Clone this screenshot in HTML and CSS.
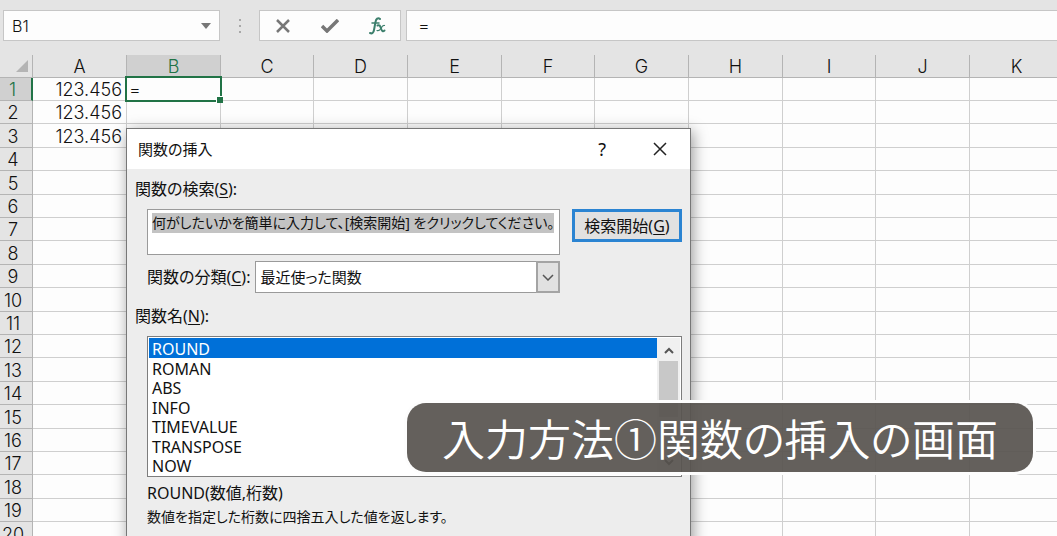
FILE: index.html
```html
<!DOCTYPE html>
<html lang="ja">
<head>
    <meta charset="UTF-8">
    <meta name="viewport" content="width=device-width, initial-scale=1.0">
    <title>関数の挿入</title>
    <link rel="stylesheet" href="styles.css">
</head>

<body>
    <div class="formula-bar">
        <div class="name-box">
            <input type="text" value="B1" aria-label="名前ボックス">
            <svg class="name-arrow" width="10" height="6" viewBox="0 0 10 6"><path d="M0 0h10L5 6z" fill="#777"/></svg>
        </div>
        <svg class="grip" width="4" height="14" viewBox="0 0 4 14" fill="#a8a8a8">
            <rect x="1" y="0" width="2" height="2"/><rect x="1" y="6" width="2" height="2"/><rect x="1" y="12" width="2" height="2"/>
        </svg>
        <div class="formula-buttons">
            <button type="button" aria-label="キャンセル">
                <svg width="16" height="14" viewBox="0 0 16 14" fill="none" stroke="#777" stroke-width="2.500"><path d="M2 1l12 12M14 1L2 13"/></svg>
            </button>
            <button type="button" aria-label="入力">
                <svg width="18" height="14" viewBox="0 0 18 14" fill="none" stroke="#777" stroke-width="3.500"><path d="M1 7l5 5L17 1"/></svg>
            </button>
            <button type="button" class="fx" aria-label="関数の挿入">
                <svg width="18" height="18" viewBox="0 0 18 18" fill="none" stroke="#3c7f6c" stroke-linecap="round">
                    <path d="M11 2c-2-2-4 0-4.500 3L5 13c-.5 3-2 4-4 3" stroke-width="2"/>
                    <path d="M3 6h7" stroke-width="1.500"/>
                    <path d="M8.500 8.500c2-1 2.500 0 3.500 3s2 3.500 3.500 2" stroke-width="2"/>
                    <path d="M15.500 8.500c-2-.5-3 2-4 3.500s-2 2-3.500 1.500" stroke-width="1.200"/>
                </svg>
            </button>
        </div>
        <input class="formula-input" type="text" value="=" aria-label="数式バー">
    </div>

    <table class="sheet" id="sheet">
        <colgroup>
            <col class="col-index"><col><col><col><col><col><col><col><col><col><col><col class="col-last">
        </colgroup>
        <thead>
            <tr>
                <th class="corner"><svg width="12" height="12" viewBox="0 0 12 12"><path d="M12 0v12H0z" fill="#b4b4b4"/></svg></th>
                <th>A</th><th class="active">B</th><th>C</th><th>D</th><th>E</th><th>F</th><th>G</th><th>H</th><th>I</th><th>J</th><th>K</th>
            </tr>
        </thead>
        <tbody></tbody>
    </table>

    <div class="dialog" role="dialog" aria-labelledby="dialogTitle">
        <div class="dialog-title">
            <span id="dialogTitle">関数の挿入</span>
            <button type="button" class="help">?</button>
            <button type="button" class="close" aria-label="閉じる">
                <svg width="14" height="14" viewBox="0 0 14 14" fill="none" stroke="#222" stroke-width="1.500"><path d="M1 1l12 12M13 1L1 13"/></svg>
            </button>
        </div>
        <div class="dialog-body">
            <label for="search">関数の検索(<u>S</u>):</label>
            <div class="search-row">
                <textarea id="search">何がしたいかを簡単に入力して、[検索開始] をクリックしてください。</textarea>
                <button type="button" class="search-button">検索開始(<u>G</u>)</button>
            </div>
            <div class="category-row">
                <label for="category">関数の分類(<u>C</u>):</label>
                <div class="dropdown">
                    <select id="category">
                        <option>最近使った関数</option>
                    </select>
                    <span class="dropdown-arrow">
                        <svg width="12" height="7" viewBox="0 0 12 7" fill="none" stroke="#555" stroke-width="1.500"><path d="M1 1l5 5 5-5"/></svg>
                    </span>
                </div>
            </div>
            <label class="list-label" for="functions">関数名(<u>N</u>):</label>
            <div class="list-box">
                <select id="functions" size="7">
                    <option selected>ROUND</option>
                    <option>ROMAN</option>
                    <option>ABS</option>
                    <option>INFO</option>
                    <option>TIMEVALUE</option>
                    <option>TRANSPOSE</option>
                    <option>NOW</option>
                </select>
                <div class="scrollbar">
                    <svg width="10" height="7" viewBox="0 0 10 7" fill="none" stroke="#555" stroke-width="2"><path d="M1 6l4-4 4 4"/></svg>
                    <div class="thumb"></div>
                    <svg width="10" height="7" viewBox="0 0 10 7" fill="none" stroke="#333" stroke-width="2"><path d="M1 1l4 4 4-4"/></svg>
                </div>
            </div>
            <p class="syntax">ROUND(数値,桁数)</p>
            <p class="description">数値を指定した桁数に四捨五入した値を返します。</p>
        </div>
    </div>

    <div class="caption">入力方法①関数の挿入の画面</div>

    <script>
        const columnCount = 11;
        const rowCount = 20;
        const values = { '1-1': '123.456', '2-1': '123.456', '3-1': '123.456', '1-2': '=' };
        const body = document.querySelector('#sheet tbody');

        for (let row = 1; row <= rowCount; row++) {
            const tr = document.createElement('tr');
            const index = document.createElement('th');
            index.textContent = row;
            if (row === 1) index.classList.add('active');
            tr.append(index);

            for (let column = 1; column <= columnCount; column++) {
                const td = document.createElement('td');
                td.textContent = values[`${row}-${column}`] || '';
                if (row === 1 && column === 2) td.classList.add('selected');
                tr.append(td);
            }
            body.append(tr);
        }

        const search = document.getElementById('search');
        search.focus();
        search.select();
    </script>
</body>
</html>
```
FILE: styles.css
```css
* {
    box-sizing: border-box;
}

body {
    position: relative;
    height: 100vh;
    margin: 0;
    overflow: hidden;
    background: #e4e4e4;
    color: #111;
    font-family: "Noto Sans", "Noto Sans CJK JP", sans-serif;
    font-size: 16px;
}

button, input, select, textarea {
    margin: 0;
    padding: 0;
    border: 0;
    border-radius: 0;
    background: none;
    color: inherit;
    font: inherit;
    outline: none;
}

/* formula bar */
.formula-bar {
    display: flex;
    align-items: center;
    height: 55px;
    padding: 10px 0 14px 3px;
    font-family: Inter, sans-serif;
    font-weight: 300;
}

.name-box,
.formula-buttons,
.formula-input {
    height: 31px;
    border: 1px solid #c6c6c6;
    background: #fdfdfd;
}

.name-box {
    display: flex;
    align-items: center;
    width: 217px;
    padding: 0 8px;
}

.name-box input {
    flex: 1;
    min-width: 0;
}

.grip {
    margin: 0 17px 0 18px;
}

.formula-buttons {
    display: flex;
    align-items: center;
    gap: 30px;
    width: 142px;
    padding: 0 15px;
}

.formula-buttons button {
    display: flex;
}

.formula-input {
    flex: 1;
    margin-left: 5px;
    padding-left: 11px;
    border-right: 0;
    font-size: 18px;
}

/* sheet */
.sheet {
    width: 100%;
    min-width: 1064px;
    table-layout: fixed;
    border-collapse: separate;
    border-spacing: 0;
    background: #fdfdfd;
    font-family: Inter, sans-serif;
    font-size: 18px;
    font-weight: 300;
    line-height: 20px;
}

.sheet col {
    width: 94px;
}

.sheet col:nth-child(3n+1) {
    width: 93px;
}

.sheet col.col-index {
    width: 33px;
}

.sheet col.col-last {
    width: auto;
}

.sheet th,
.sheet td {
    height: 23px;
    padding: 0;
    border-right: 1px solid #cfcfcf;
    border-bottom: 1px solid #cfcfcf;
    white-space: nowrap;
}

.sheet tbody tr:nth-child(5n+3) td,
.sheet tbody tr:nth-child(5n) td {
    height: 24px;
}

.sheet th {
    background: #e4e4e4;
    border-color: #b4b4b4;
    font-weight: 300;
}

.sheet thead th {
    padding-top: 2px;
}

.sheet tbody th {
    padding: 2px 6px 0 0;
}

.sheet th.active {
    background: #d0d0d0;
    color: #217346;
}

.sheet tbody th.active {
    border-right: 2px solid #217346;
}

.sheet thead .corner {
    padding: 0 4px 0 0;
    text-align: right;
    line-height: 0;
}

.sheet td {
    padding: 2px 4px 0 0;
    text-align: right;
}

.sheet td.selected {
    position: relative;
    padding-left: 2px;
    text-align: left;
}

.sheet td.selected::before {
    content: "";
    position: absolute;
    inset: -2px -2px -2px -2px;
    border: 2px solid #217346;
}

.sheet td.selected::after {
    content: "";
    position: absolute;
    right: -3px;
    bottom: -3px;
    width: 6px;
    height: 6px;
    border: solid #fff;
    border-width: 1px 0 0 1px;
    background: #217346;
}

/* dialog */
.dialog {
    position: absolute;
    top: 128px;
    left: 126px;
    width: 565px;
    height: 440px;
    border: 1px solid #777;
    background: #ededed;
    box-shadow: 2px 3px 14px rgba(0, 0, 0, .4);
    font-feature-settings: "palt";
    line-height: 20px;
}

.dialog-title {
    display: flex;
    align-items: center;
    height: 40px;
    padding: 0 23px 0 11px;
    background: #fff;
    font-size: 15px;
}

.dialog-title .help {
    margin-left: auto;
    font-size: 18px;
}

.dialog-title .close {
    display: flex;
    margin-left: 47px;
}

.dialog-body {
    display: flex;
    flex-direction: column;
    padding: 10px 8px;
}

.dialog-body u {
    text-underline-offset: 2px;
}

.search-row {
    display: flex;
    align-items: flex-start;
    gap: 12px;
    margin: 10px 0 6px 12px;
}

.search-row textarea {
    flex: 1;
    min-width: 0;
    height: 46px;
    padding: 3px 4px;
    border: 1px solid #9a9a9a;
    background: #fff;
    font-size: 14px;
    line-height: 20px;
    resize: none;
    overflow: hidden;
    white-space: nowrap;
}

.search-row textarea::selection {
    background: #c3c3c3;
    color: #111;
}

.search-button {
    width: 110px;
    height: 33px;
    border: 3px solid #2b84d2;
    background: #e1e1e1;
}

.category-row {
    display: flex;
    align-items: center;
    gap: 5px;
    margin: 0 122px 0 12px;
}

.dropdown {
    position: relative;
    flex: 1;
}

.dropdown select {
    display: block;
    width: 100%;
    height: 32px;
    padding-left: 4px;
    border: 1px solid #9a9a9a;
    background: #fff;
    font-size: 15px;
    appearance: none;
}

.dropdown-arrow {
    position: absolute;
    top: 0;
    right: 0;
    bottom: 0;
    display: grid;
    place-items: center;
    width: 24px;
    border: 2px solid #a4a4a4;
    background: #e1e1e1;
    pointer-events: none;
}

.list-label {
    margin-top: 13px;
}

.list-box {
    display: flex;
    height: 141px;
    margin: 10px 0 6px 12px;
    padding: 1px;
    border: 1px solid #7d7d7d;
    background: #fff;
}

.list-box select {
    flex: 1;
    height: 138px;
    overflow: hidden;
    scrollbar-width: none;
}

.list-box option {
    height: 19px;
    min-height: 19px;
    padding: 0 3px;
    line-height: 19px;
}

.list-box option:nth-child(odd) {
    height: 20px;
}

.list-box option:checked {
    background: #0070d8 linear-gradient(#0070d8, #0070d8);
    color: #fff;
    -webkit-text-fill-color: #fff;
}

.scrollbar {
    display: flex;
    flex-direction: column;
    align-items: center;
    width: 23px;
    padding: 9px 2px;
    background: #f0f0f0;
}

.thumb {
    width: 100%;
    height: 56px;
    margin: 7px 0 auto;
    background: #c8c8c8;
}

.dialog-body p {
    margin: 0 0 4px 12px;
}

.dialog-body .description {
    font-size: 14px;
}

/* caption */
.caption {
    position: absolute;
    right: 24px;
    bottom: 64px;
    padding: 0 35px;
    border-radius: 19px;
    background: rgba(88, 84, 80, .93);
    box-shadow: 0 0 0 3px #fdfdfd;
    color: #fff;
    font-family: "Noto Sans CJK JP", sans-serif;
    font-feature-settings: "palt";
    font-size: 43px;
    font-weight: 350;
    line-height: 69px;
    white-space: nowrap;
}
```
